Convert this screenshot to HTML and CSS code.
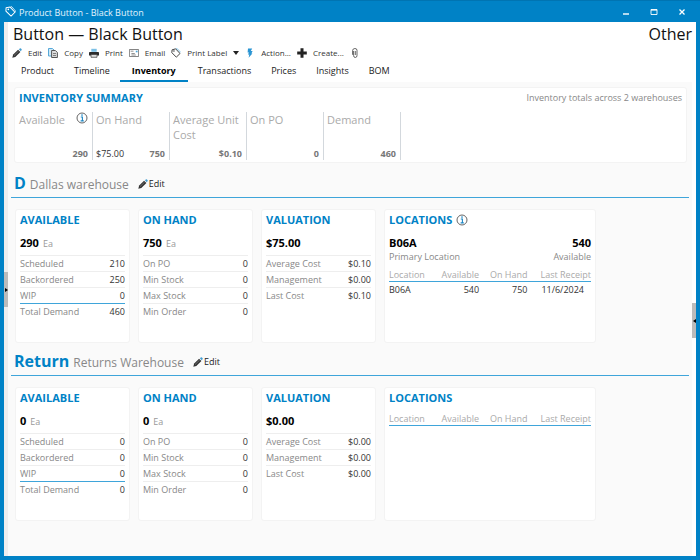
FILE: index.html
```html
<!DOCTYPE html>
<html lang="en">
<head>
    <meta charset="UTF-8">
    <meta name="viewport" content="width=device-width, initial-scale=1.0">
    <title>Product Button - Black Button</title>
    <link rel="stylesheet" href="styles.css">
</head>
<body>
    <!-- shared icons -->
    <svg class="defs" aria-hidden="true">
        <symbol id="pencil" viewBox="0 0 10 10">
            <path d="M0.3 9.7L1.2 6.6L6.1 1.7L8.4 4L3.3 8.9Z" fill="#333"/>
            <path d="M6.9 1.2L7.8 0.4Q8.3 0 8.9 0.5L9.5 1.1Q10 1.7 9.5 2.3L8.8 3.2Z" fill="#3f9bd0"/>
            <path d="M2 7.6L6.7 3" stroke="#999" stroke-width="0.6"/>
        </symbol>
        <symbol id="tag" viewBox="0 0 12 12">
            <path d="M1.3 2.2L5.6 1L10.8 6.6L6.4 11L1 5.6Z" fill="#fff" stroke="currentColor" stroke-width="1.1" stroke-linejoin="round"/>
            <path d="M6.2 0.8L7.6 0.9L11.6 5.2" fill="none" stroke="#6bb9e6" stroke-width="1"/>
            <circle cx="3.5" cy="3.6" r="0.9" fill="currentColor"/>
        </symbol>
        <symbol id="info" viewBox="0 0 12 12">
            <circle cx="6" cy="6" r="5" fill="#fff" stroke="#666" stroke-width="1"/>
            <path d="M4.8 5H6.4V8.8M4.6 8.9H7.8" fill="none" stroke="#1b86c4" stroke-width="1.1"/>
            <circle cx="6" cy="3.1" r="0.8" fill="#1b86c4"/>
        </symbol>
    </svg>

    <div class="window">
        <header class="titlebar">
            <svg class="app-icon" viewBox="0 0 12 12">
                <path d="M1.2 2L5.6 1.2L10.8 6.8L6.6 11L1 5.6Z" fill="none" stroke="#fff" stroke-width="1.1" stroke-linejoin="round"/>
                <path d="M6.4 0.6L7.6 0.9L11.6 5.6L10.4 7.4" fill="none" stroke="#fff" stroke-width="0.8"/>
                <circle cx="3.6" cy="3.7" r="0.9" fill="#fff"/>
            </svg>
            <span class="caption">Product Button - Black Button</span>
            <button type="button" aria-label="Minimize"><svg viewBox="0 0 8 8"><path d="M1 6H7" stroke="#fff" stroke-width="1.4"/></svg></button>
            <button type="button" aria-label="Maximize"><svg viewBox="0 0 8 8"><path d="M1 1.5H7V6.5H1Z" fill="none" stroke="#fff" stroke-width="0.9"/><path d="M1 2H7" stroke="#fff" stroke-width="1.2"/></svg></button>
            <button type="button" aria-label="Close"><svg viewBox="0 0 8 8"><path d="M1.5 1.5L6.5 6.5M6.5 1.5L1.5 6.5" stroke="#fff" stroke-width="1.3"/></svg></button>
        </header>

        <div class="frame">
            <div class="heading">
                <h1>Button — Black Button</h1>
                <span>Other</span>
            </div>

            <div class="toolbar">
                <button type="button"><svg class="icon"><use href="#pencil"/></svg>Edit</button>
                <button type="button">
                    <svg class="icon" viewBox="0 0 10 10">
                        <path d="M0.5 0.5H4.5L6 2V8H0.5Z" fill="#cfe9f8" stroke="#57a9d9"/>
                        <path d="M3.6 2.5H7.4L9.4 4.5V9.5H3.6Z" fill="#ddd" stroke="#555"/>
                        <path d="M5 5.5H8M5 7.5H8" stroke="#666" stroke-width="0.8"/>
                    </svg>Copy</button>
                <button type="button">
                    <svg class="icon" viewBox="0 0 10 10">
                        <path d="M2.3 3.8V0.8H7.7V3.8Z" fill="#7cc0e6"/>
                        <path d="M0 4.7Q0 4 0.7 4H9.3Q10 4 10 4.7V7.6H0Z" fill="#2c2c2c"/>
                        <path d="M2 6.5H8V9.3H2Z" fill="#ddd" stroke="#3c3c3c" stroke-width="0.7"/>
                    </svg>Print</button>
                <button type="button">
                    <svg class="icon" viewBox="0 0 10 10">
                        <path d="M0.4 1.5H9.6V8.5H0.4Z" fill="#fff" stroke="#666" stroke-width="0.8"/>
                        <path d="M6.8 2.7H8.6V4.3H6.8Z" fill="#4ba5d8"/>
                        <path d="M1.6 3.2H4.5M2.4 5.5H5.8M2.4 7H6.8" stroke="#777" stroke-width="0.8"/>
                    </svg>Email</button>
                <button type="button"><svg class="icon"><use href="#tag"/></svg>Print Label<i class="caret"></i></button>
                <button type="button">
                    <svg class="icon" viewBox="0 0 10 10">
                        <path d="M3 0.5H7.2L5.8 3H7.6L6.4 5.4H7.4L3.6 9.8L4.3 6.5H2.9L4 4.5H2.6Z" fill="#2b95d3"/>
                    </svg>Action...</button>
                <button type="button">
                    <svg class="icon" viewBox="0 0 10 10"><path d="M5 0.2V9.8M0.2 5H9.8" stroke="#222" stroke-width="3"/></svg>Create...</button>
                <button type="button" aria-label="Attachments">
                    <svg class="icon" viewBox="0 0 10 10">
                        <path d="M3.6 3V7.5Q3.6 9.5 5.3 9.5T7 7.5V2.3Q7 0.5 4.9 0.5T2.6 2.5V6.8M5.3 3V7" fill="none" stroke="#555" stroke-width="0.9"/>
                    </svg></button>
            </div>

            <nav class="tabs">
                <a href="#product">Product</a>
                <a href="#timeline">Timeline</a>
                <a href="#inventory" class="active">Inventory</a>
                <a href="#transactions">Transactions</a>
                <a href="#prices">Prices</a>
                <a href="#insights">Insights</a>
                <a href="#bom">BOM</a>
            </nav>

            <main>
                <section class="card summary">
                    <div class="summary-head">
                        <h2>INVENTORY SUMMARY</h2>
                        <span>Inventory totals across 2 warehouses</span>
                    </div>
                    <div class="metrics">
                        <div class="metric">
                            <div class="label">Available <svg class="info"><use href="#info"/></svg></div>
                            <div class="figures"><b>290</b></div>
                        </div>
                        <div class="metric">
                            <div class="label">On Hand</div>
                            <div class="figures"><span>$75.00</span><b>750</b></div>
                        </div>
                        <div class="metric">
                            <div class="label">Average Unit Cost</div>
                            <div class="figures"><b>$0.10</b></div>
                        </div>
                        <div class="metric">
                            <div class="label">On PO</div>
                            <div class="figures"><b>0</b></div>
                        </div>
                        <div class="metric">
                            <div class="label">Demand</div>
                            <div class="figures"><b>460</b></div>
                        </div>
                    </div>
                </section>

                <section class="warehouse">
                    <div class="warehouse-head">
                        <h2>D</h2>
                        <span class="name">Dallas warehouse</span>
                        <button type="button"><svg class="icon"><use href="#pencil"/></svg>Edit</button>
                    </div>
                    <div class="cards">
                        <div class="card">
                            <h3>AVAILABLE</h3>
                            <p class="total">290 <small>Ea</small></p>
                            <table class="stats">
                                <tr><th>Scheduled</th><td>210</td></tr>
                                <tr><th>Backordered</th><td>250</td></tr>
                                <tr><th>WIP</th><td>0</td></tr>
                                <tr class="sum"><th>Total Demand</th><td>460</td></tr>
                            </table>
                        </div>
                        <div class="card">
                            <h3>ON HAND</h3>
                            <p class="total">750 <small>Ea</small></p>
                            <table class="stats">
                                <tr><th>On PO</th><td>0</td></tr>
                                <tr><th>Min Stock</th><td>0</td></tr>
                                <tr><th>Max Stock</th><td>0</td></tr>
                                <tr><th>Min Order</th><td>0</td></tr>
                            </table>
                        </div>
                        <div class="card">
                            <h3>VALUATION</h3>
                            <p class="total">$75.00</p>
                            <table class="stats">
                                <tr><th>Average Cost</th><td>$0.10</td></tr>
                                <tr><th>Management</th><td>$0.00</td></tr>
                                <tr><th>Last Cost</th><td>$0.10</td></tr>
                            </table>
                        </div>
                        <div class="card">
                            <h3>LOCATIONS <svg class="info"><use href="#info"/></svg></h3>
                            <p class="total">B06A <span>540</span></p>
                            <p class="primary">Primary Location <span>Available</span></p>
                            <table class="locations">
                                <thead>
                                    <tr><th>Location</th><th>Available</th><th>On Hand</th><th>Last Receipt</th></tr>
                                </thead>
                                <tbody>
                                    <tr><td>B06A</td><td>540</td><td>750</td><td>11/6/2024</td></tr>
                                </tbody>
                            </table>
                        </div>
                    </div>
                </section>

                <section class="warehouse">
                    <div class="warehouse-head">
                        <h2>Return</h2>
                        <span class="name">Returns Warehouse</span>
                        <button type="button"><svg class="icon"><use href="#pencil"/></svg>Edit</button>
                    </div>
                    <div class="cards">
                        <div class="card">
                            <h3>AVAILABLE</h3>
                            <p class="total">0 <small>Ea</small></p>
                            <table class="stats">
                                <tr><th>Scheduled</th><td>0</td></tr>
                                <tr><th>Backordered</th><td>0</td></tr>
                                <tr><th>WIP</th><td>0</td></tr>
                                <tr class="sum"><th>Total Demand</th><td>0</td></tr>
                            </table>
                        </div>
                        <div class="card">
                            <h3>ON HAND</h3>
                            <p class="total">0 <small>Ea</small></p>
                            <table class="stats">
                                <tr><th>On PO</th><td>0</td></tr>
                                <tr><th>Min Stock</th><td>0</td></tr>
                                <tr><th>Max Stock</th><td>0</td></tr>
                                <tr><th>Min Order</th><td>0</td></tr>
                            </table>
                        </div>
                        <div class="card">
                            <h3>VALUATION</h3>
                            <p class="total">$0.00</p>
                            <table class="stats">
                                <tr><th>Average Cost</th><td>$0.00</td></tr>
                                <tr><th>Management</th><td>$0.00</td></tr>
                                <tr><th>Last Cost</th><td>$0.00</td></tr>
                            </table>
                        </div>
                        <div class="card">
                            <h3>LOCATIONS</h3>
                            <table class="locations">
                                <thead>
                                    <tr><th>Location</th><th>Available</th><th>On Hand</th><th>Last Receipt</th></tr>
                                </thead>
                            </table>
                        </div>
                    </div>
                </section>
            </main>

            <button type="button" class="handle handle-left" aria-label="Open left panel"></button>
            <button type="button" class="handle handle-right" aria-label="Open right panel"></button>
        </div>
    </div>
</body>
</html>
```
FILE: styles.css
```css
*{
    box-sizing: border-box;
}
body{
    margin: 0;
    font-family: "Open Sans", "Noto Sans", sans-serif;
    font-size: 9px;
    line-height: 12px;
    color: #333;
}
h1, h2, h3, p{
    margin: 0;
}
button{
    display: flex;
    align-items: center;
    padding: 0;
    border: 0;
    background: none;
    font: inherit;
    color: inherit;
    cursor: pointer;
}
.defs{
    position: absolute;
    width: 0;
    height: 0;
}
.icon{
    width: 10px;
    height: 10px;
}
.info{
    width: 12px;
    height: 12px;
}

/* window chrome */
.window{
    display: flex;
    flex-direction: column;
    min-height: 100vh;
    padding: 0 4px 4px;
    background-color: #0082c6;
    border-top: 1px solid #0074b2;
}
.titlebar{
    display: flex;
    align-items: center;
    height: 21px;
    color: #e4f4fd;
}
.app-icon{
    width: 11px;
    height: 11px;
    margin: 0 3px 0 1px;
}
.caption{
    flex: 1;
    padding-top: 3px;
}
.titlebar button{
    width: 28px;
    height: 20px;
    justify-content: center;
}
.titlebar svg{
    flex: none;
}
.titlebar button svg{
    width: 8px;
    height: 8px;
}
.frame{
    position: relative;
    flex: 1;
    display: flex;
    flex-direction: column;
    background-color: #fff;
    border-left: 4px solid #eee;
    padding-right: 4px;
}

/* page heading */
.heading{
    display: flex;
    justify-content: space-between;
    padding-left: 5px;
    font-size: 16px;
    line-height: 25px;
    color: #111;
}
.heading h1{
    font-size: 16px;
    font-weight: normal;
}
.toolbar{
    display: flex;
    gap: 6px;
    padding-left: 4px;
    font-size: 8px;
    line-height: 12px;
}
.toolbar button{
    gap: 6px;
}
.caret{
    border: 3px solid transparent;
    border-top: 4px solid #222;
    border-bottom: 0;
}
.tabs{
    display: flex;
    padding-left: 3px;
}
.tabs a{
    padding: 6px 10px 3px;
    border-bottom: 2px solid transparent;
    color: #222;
    text-decoration: none;
}
.tabs a.active{
    padding: 6px 12px 3px;
    border-color: #0082c6;
    color: #000;
    font-weight: bold;
}

main{
    flex: 1;
    background-color: #fafafa;
    padding: 5px 3px 0 3px;
}
.card{
    background-color: #fff;
    border: 1px solid #f3f3f3;
    border-radius: 3px;
}

/* totals over all warehouses */
.summary{
    margin: 0 2px 8px 3px;
    padding: 2px 4px;
}
.summary-head{
    display: flex;
    justify-content: space-between;
    line-height: 16px;
    color: #888;
}
.summary h2, h3{
    font-size: 11px;
    line-height: 16px;
    color: #0082c6;
}
.metrics{
    display: flex;
    margin-top: 6px;
}
.metric{
    display: flex;
    flex-direction: column;
    justify-content: space-between;
    width: 77px;
    height: 48px;
    padding: 0 4px 0 3px;
    border-right: 1px solid #d3d8dd;
}
.metric:first-child{
    width: 74px;
    padding-left: 0;
}
.label{
    display: flex;
    justify-content: space-between;
    font-size: 11px;
    line-height: 15px;
    color: #aaa;
}
.figures{
    display: flex;
    justify-content: space-between;
    line-height: 13px;
}
.figures b{
    margin-left: auto;
    color: #777;
}

/* one block per warehouse */
.warehouse-head{
    display: flex;
    align-items: baseline;
    gap: 4px;
    height: 27px;
    margin-top: 6px;
    padding-left: 3px;
    border-bottom: 1px solid #3fa5da;
    line-height: 25px;
}
.warehouse h2{
    font-size: 16px;
    color: #0082c6;
}
.name{
    font-size: 12px;
    color: #888;
}
.warehouse-head button{
    align-self: center;
    gap: 1px;
    margin-left: 5px;
    line-height: 12px;
    color: #222;
}
.cards{
    display: grid;
    grid-template-columns: 115px 115px 115px 212px;
    gap: 8px;
    margin: 11px 0 0 4px;
}
.cards .card{
    min-height: 134px;
    padding: 2px 4px;
}
h3{
    display: flex;
    align-items: center;
    gap: 4px;
}
.total{
    display: flex;
    align-items: baseline;
    gap: 4px;
    height: 18px;
    margin-top: 6px;
    font-size: 11px;
    font-weight: bold;
    line-height: 18px;
    color: #000;
}
.total small{
    font-size: 9px;
    font-weight: normal;
    color: #999;
}
.total span, .primary span{
    margin-left: auto;
}
.primary{
    display: flex;
    line-height: 10px;
    color: #888;
}
table{
    width: 100%;
    border-collapse: separate;
    border-spacing: 0;
}
th{
    font-weight: normal;
    text-align: left;
    color: #888;
}
td{
    text-align: right;
}
.stats{
    margin-top: 3px;
}
.stats th, .stats td{
    height: 16px;
    padding: 0;
    border-top: 1px solid #eee;
}
.stats .sum th, .stats .sum td{
    border-top-color: #3fa5da;
}
.locations{
    margin-top: 7px;
}
.locations th{
    padding: 0 0 0 4px;
    border-bottom: 1px solid #3fa5da;
    text-align: right;
    color: #aaa;
}
.locations td{
    padding: 2px 0;
}
.locations th:first-child, .locations td:first-child{
    padding-left: 0;
    text-align: left;
}
.locations td:last-child{
    padding-right: 7px;
}

/* side panel grips */
.handle{
    position: absolute;
    width: 4px;
    height: 35px;
    justify-content: center;
    background-color: #bbb;
}
.handle::before{
    content: "";
    border: 2px solid transparent;
}
.handle-left{
    left: -4px;
    top: 250px;
}
.handle-left::before{
    border-left: 3px solid #000;
    border-right: 0;
}
.handle-right{
    right: 0;
    top: 281px;
}
.handle-right::before{
    border-right: 3px solid #000;
    border-left: 0;
}
```
